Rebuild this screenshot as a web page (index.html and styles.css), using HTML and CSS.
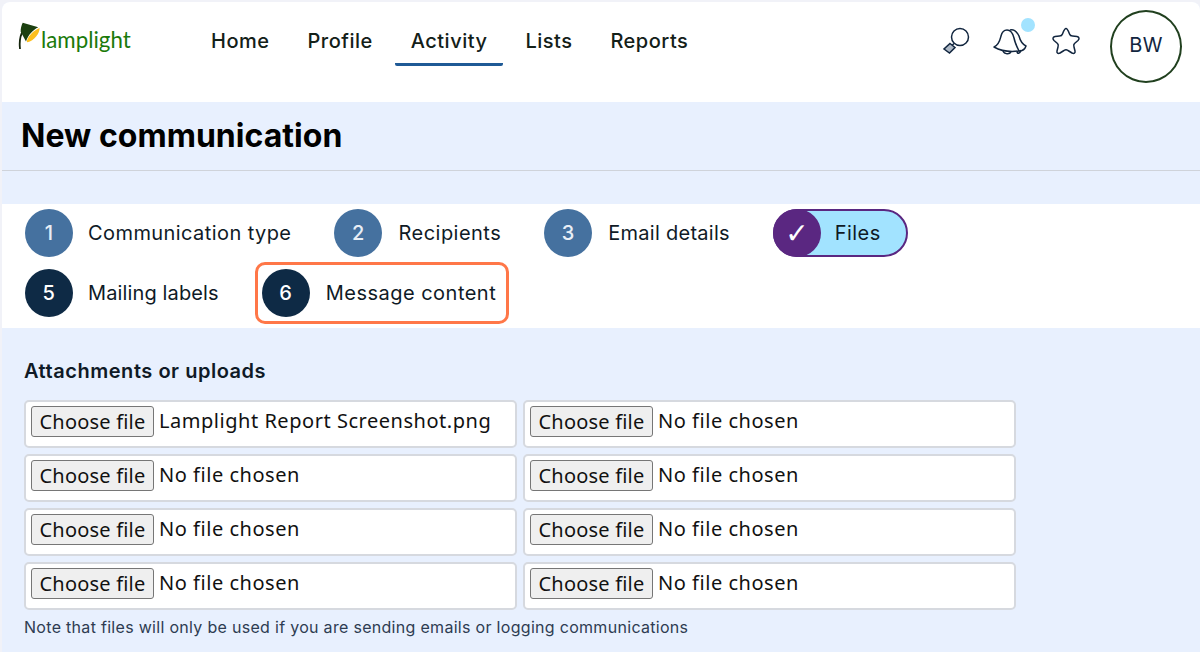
FILE: index.html
```html
<!DOCTYPE html>
<html lang="en">
<head>
<meta charset="utf-8">
<title>New communication</title>
<link rel="stylesheet" href="styles.css">
</head>
<body>
<div class="frame">
  <header class="topbar">
    <a class="logo">
      <svg class="lamp" width="24" height="30" viewBox="0 0 24 30">
        <path d="M2 28 C1.300 22 1.500 15 5.500 9" fill="none" stroke="#14240c" stroke-width="1.800"/>
        <path d="M4.700 1.700 L20.300 6.300 C15 9 10 14 8 20.600 L2.700 10.700 C2.500 8 3.500 4 4.700 1.700 Z" fill="#1c4010"/>
        <path d="M21.500 7 C22 12 16 20 9.500 21.300 C8.700 21.300 8.700 20.300 9.200 19 C11 14 16 9.500 21.500 7 Z" fill="#fdbf1e"/>
      </svg>
      <span class="logo-text">lamplight</span>
    </a>
    <nav class="nav">
      <a class="nav-item">Home</a>
      <a class="nav-item">Profile</a>
      <a class="nav-item active">Activity</a>
      <a class="nav-item">Lists</a>
      <a class="nav-item">Reports</a>
    </nav>
    <div class="tools">
      <svg class="icon search" width="30" height="30" viewBox="0 0 30 30" fill="none" stroke="#12263f" stroke-width="1.500">
        <circle cx="18" cy="11" r="8.500"/>
        <path d="M12 17.500 L10 19.500"/>
        <path d="M8 17.500 L13 21.500 L7.500 27 L2 23 Z" fill="#aeb9c6"/>
      </svg>
      <span class="bell">
        <svg class="icon" width="34" height="30" viewBox="0 0 34 30" fill="none" stroke="#12263f" stroke-width="1.500" stroke-linejoin="round">
          <path d="M17 4 C21 3 24 6 26 10 C27 14 29 18 33 20 C32 23 29 25 26 25"/>
          <path d="M24 25.500 C24 28 27 28 28 24"/>
          <path d="M10 24 C10 28 16 29 18 26"/>
          <path d="M1 21 C6 19 7 14 8 10 C9 6 11 4 14 4 C18 4 20 8 21 12 C22 17 24 21 26 25 C18 26 8 25 1 21 Z" fill="#fff"/>
        </svg>
        <span class="dot"></span>
      </span>
      <svg class="icon star" width="30" height="30" viewBox="0 0 30 30" fill="none" stroke="#12263f" stroke-width="1.500" stroke-linejoin="round">
        <path d="M15 2.500 C16.500 2.500 17 4 18.500 8 C19 9.500 20 10 21.500 10 L26 10.500 C28.500 11 28.500 13 27 14.500 L23.500 17.500 C22.500 18.500 22.500 19.500 23 21 L24 25 C24.500 27 23 28 21 27 L17 24.500 C15.500 23.500 14.500 23.500 13 24.500 L9 27 C7 28 5.500 27 6 25 L7 21 C7.500 19.500 7.500 18.500 6.500 17.500 L3 14.500 C1.500 13 1.500 11 4 10.500 L8.500 10 C10 10 11 9.500 11.500 8 C13 4 13.500 2.500 15 2.500 Z"/>
      </svg>
      <div class="avatar">BW</div>
    </div>
  </header>

  <section class="title-band">
    <h1 class="title">New communication</h1>
    <hr class="rule">
  </section>

  <section class="steps">
    <div class="step-row">
      <div class="step done"><span class="num">1</span><span class="step-label">Communication type</span></div>
      <div class="step done"><span class="num">2</span><span class="step-label wide">Recipients</span></div>
      <div class="step done"><span class="num">3</span><span class="step-label tight">Email details</span></div>
      <div class="step current"><span class="num check">✓</span><span class="step-label">Files</span></div>
    </div>
    <div class="step-row">
      <div class="step todo"><span class="num">5</span><span class="step-label tighter">Mailing labels</span></div>
      <div class="step todo highlighted"><span class="num">6</span><span class="step-label wide">Message content</span></div>
    </div>
  </section>

  <section class="content">
    <h2 class="section-title">Attachments or uploads</h2>
    <div class="uploads">
      <div class="upload"><button class="choose" type="button">Choose file</button><span class="file-name">Lamplight Report Screenshot.png</span></div>
      <div class="upload"><button class="choose" type="button">Choose file</button><span class="file-name">No file chosen</span></div>
      <div class="upload"><button class="choose" type="button">Choose file</button><span class="file-name">No file chosen</span></div>
      <div class="upload"><button class="choose" type="button">Choose file</button><span class="file-name">No file chosen</span></div>
      <div class="upload"><button class="choose" type="button">Choose file</button><span class="file-name">No file chosen</span></div>
      <div class="upload"><button class="choose" type="button">Choose file</button><span class="file-name">No file chosen</span></div>
      <div class="upload"><button class="choose" type="button">Choose file</button><span class="file-name">No file chosen</span></div>
      <div class="upload"><button class="choose" type="button">Choose file</button><span class="file-name">No file chosen</span></div>
    </div>
    <p class="note">Note that files will only be used if you are sending emails or logging communications</p>
  </section>
</div>
</body>
</html>
```

FILE: styles.css
```css
* { box-sizing: border-box; }
html, body { margin: 0; height: 652px; overflow: hidden; }
body {
  background: #f1f2f8;
  font-family: "Inter", "Noto Sans", sans-serif;
  color: #0f1a26;
}
.frame {
  margin: 2px 0 0 2px;
  height: 650px;
  overflow: hidden;
  border-radius: 8px 8px 0 0;
  background: #e8f0fe;
}
.topbar {
  height: 100px;
  background: #fff;
  display: flex;
  align-items: flex-start;
}
.logo { display: flex; align-items: flex-start; margin: 19px 0 0 16px; width: 177px; flex: none; }
.lamp { flex: none; }
.logo-text {
  font-family: "Lato", sans-serif;
  font-size: 22.3px;
  line-height: 28px;
  color: #1a7a0a;
  margin: 5px 0 0 -1px;
}
.nav { display: flex; gap: 6px; margin-top: 19px; }
.nav-item {
  font-size: 20px;
  letter-spacing: 0.5px;
  line-height: 40px;
  height: 45px;
  padding: 0 16px;
  font-weight: 500;
  color: #132018;
}
.nav-item.active { border-bottom: 3px solid #1f5a96; border-radius: 2px; }
.tools { display: flex; align-items: flex-start; margin-left: auto; margin-right: 18px; }
.icon { display: block; }
.search { margin-top: 24px; }
.bell { position: relative; margin: 24px 0 0 21px; display: block; }
.dot {
  position: absolute;
  top: -8px;
  right: -8px;
  width: 14px;
  height: 14px;
  border-radius: 50%;
  background: #a2e3ff;
}
.star { margin: 24px 0 0 24px; }
.avatar {
  width: 72px;
  height: 73px;
  margin: 8px 0 0 29px;
  padding-bottom: 3px;
  border-radius: 50%;
  border: 2px solid #21401f;
  display: flex;
  align-items: center;
  justify-content: center;
  font-size: 20px;
  letter-spacing: 0.3px;
  color: #12263f;
}
.title-band { height: 102px; padding-top: 14px; }
.title {
  margin: 0 0 0 19px;
  font-size: 32px;
  letter-spacing: 0.03px;
  line-height: 40px;
  font-weight: 700;
  color: #000;
}
.rule { margin: 14px 0 0; border: 0; border-top: 1px solid #cfd3da; }
.steps {
  height: 124px;
  background: #fff;
  display: flex;
  flex-direction: column;
  gap: 12px;
  padding: 5px 0 0 23px;
}
.step-row { display: flex; }
.step { display: flex; align-items: center; height: 48px; margin-right: 43px; font-size: 20px; letter-spacing: 0.42px; position: relative; }
.num {
  width: 48px;
  height: 48px;
  flex: none;
  border-radius: 50%;
  display: flex;
  align-items: center;
  justify-content: center;
  color: #fff;
  font-weight: 500;
  font-size: 20px;
}
.step-label { margin-left: 15px; white-space: nowrap; }
.step-label.wide { margin-left: 16px; letter-spacing: 0.48px; }
.step-label.tight { margin-left: 16px; letter-spacing: 0.27px; }
.step-label.tighter { letter-spacing: 0.13px; }
.step.done .num { background: #45719f; color: #e8eef6; }
.step.todo .num { background: #0e2a45; }
.step.current {
  background: #a2e3ff;
  border: 2px solid #5a2781;
  border-radius: 24px;
  width: 135px;
}
.step.current .num { background: #5a2781; margin-left: -2px; }
.check { font-family: "DejaVu Sans", sans-serif; font-size: 28px; font-weight: 700; letter-spacing: 0; }
.step.current .step-label { margin-left: 14px; }
.highlighted::after {
  content: "";
  position: absolute;
  left: -7px;
  right: -13px;
  top: -7px;
  bottom: -7px;
  border: 3px solid #ff7748;
  border-radius: 10px;
}
.content { padding: 31px 0 0 22px; }
.section-title { margin: 0 0 17px; font-size: 20px; letter-spacing: 0.53px; line-height: 24px; font-weight: 600; color: #0f1a26; }
.uploads {
  display: grid;
  grid-template-columns: 493px 493px;
  column-gap: 6px;
  row-gap: 6px;
}
.upload {
  height: 48px;
  padding: 4px 0 0 5px;
  background: #fff;
  border: 2px solid #d6d9df;
  border-radius: 5px;
  display: flex;
  align-items: flex-start;
  font-family: "Noto Sans", sans-serif;
  font-size: 20px;
  line-height: 30px;
  color: #111;
}
.choose {
  width: 123px;
  height: 31px;
  padding: 0;
  margin: 0;
  background: #efefef;
  border: 1px solid #767676;
  border-radius: 3px;
  font: inherit;
  letter-spacing: 0.2px;
  line-height: 28px;
  color: #111;
}
.file-name { margin-left: 5px; white-space: nowrap; letter-spacing: 0.53px; }
.note { margin: 6px 0 0; font-size: 16px; letter-spacing: 0.3px; line-height: 22px; color: #2e3c52; }
```
